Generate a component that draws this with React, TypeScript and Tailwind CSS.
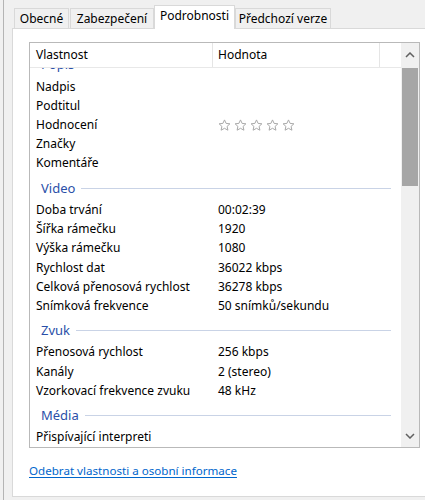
import React from "react";

type Row = { kind: "row"; name: string; value?: string; stars?: boolean } | { kind: "group"; name: string };

const rows: Row[] = [
  { kind: "group", name: "Popis" },
  { kind: "row", name: "Nadpis" },
  { kind: "row", name: "Podtitul" },
  { kind: "row", name: "Hodnocení", stars: true },
  { kind: "row", name: "Značky" },
  { kind: "row", name: "Komentáře" },
  { kind: "group", name: "Video" },
  { kind: "row", name: "Doba trvání", value: "00:02:39" },
  { kind: "row", name: "Šířka rámečku", value: "1920" },
  { kind: "row", name: "Výška rámečku", value: "1080" },
  { kind: "row", name: "Rychlost dat", value: "36022 kbps" },
  { kind: "row", name: "Celková přenosová rychlost", value: "36278 kbps" },
  { kind: "row", name: "Snímková frekvence", value: "50 snímků/sekundu" },
  { kind: "group", name: "Zvuk" },
  { kind: "row", name: "Přenosová rychlost", value: "256 kbps" },
  { kind: "row", name: "Kanály", value: "2 (stereo)" },
  { kind: "row", name: "Vzorkovací frekvence zvuku", value: "48 kHz" },
  { kind: "group", name: "Média" },
  { kind: "row", name: "Přispívající interpreti" },
];

function Star() {
  return (
    <svg width="13" height="13" viewBox="0 0 13 13" className="shrink-0">
      <path
        d="M6.5 0.9 L8.1 4.4 L11.9 4.8 L9.1 7.4 L9.9 11.2 L6.5 9.3 L3.1 11.2 L3.9 7.4 L1.1 4.8 L4.9 4.4 Z"
        fill="#ffffff"
        stroke="#a9a9a9"
        strokeWidth="1"
        strokeLinejoin="round"
      />
    </svg>
  );
}

function Chevron({ up }: { up?: boolean }) {
  return (
    <svg width="10" height="6" viewBox="0 0 10 6">
      <path
        d={up ? "M1 5 L5 1 L9 5" : "M1 1 L5 5 L9 1"}
        fill="none"
        stroke="#606060"
        strokeWidth="1.5"
      />
    </svg>
  );
}

export default function App() {
  return (
    <div
      className="w-[425px] h-[500px] bg-[#f0f0f0] overflow-hidden text-[12px] text-black"
      style={{ fontFamily: '"Noto Sans", "Segoe UI", sans-serif' }}
    >
      <div className="ml-[3px] h-[500px] border-l border-[#b4b4b4] pl-[8px]">
        {/* Tab strip */}
        <div className="flex items-end h-[28px] pl-[2px]">
          <div className="w-[55px] h-[20px] border border-b-0 border-[#d9d9d9] bg-[#f0f0f0] flex items-center justify-center leading-none pt-[1px]">
            Obecné
          </div>
          <div className="ml-[1px] w-[84px] h-[20px] border border-b-0 border-[#d9d9d9] bg-[#f0f0f0] flex items-center justify-center leading-none pt-[1px]">
            Zabezpečení
          </div>
          <div className="relative z-10 w-[81px] h-[24px] -mb-px border border-b-0 border-[#d9d9d9] bg-white flex items-start justify-center leading-none pt-[4px]">
            Podrobnosti
          </div>
          <div className="w-[96px] h-[20px] border border-b-0 border-[#d9d9d9] bg-[#f0f0f0] flex items-center justify-center leading-none pt-[1px]">
            Předchozí verze
          </div>
        </div>

        {/* Panel */}
        <div className="w-[430px] h-[469px] border border-[#d9d9d9] bg-white pt-[13px] pl-[16px]">
          {/* List view */}
          <div className="w-[391px] h-[406px] border border-[#b9b9b9] flex">
            <div className="w-[371px] flex flex-col">
              {/* Header */}
              <div className="h-[25px] flex border-b border-[#e8e8e8] shrink-0">
                <div className="w-[183px] border-r border-[#e5e5e5] pl-[6px] flex items-center pb-[1px]">
                  Vlastnost
                </div>
                <div className="w-[167px] border-r border-[#e5e5e5] pl-[5px] flex items-center pb-[1px]">
                  Hodnota
                </div>
                <div className="flex-1" />
              </div>
              {/* Body */}
              <div className="flex-1 overflow-hidden">
                <div className="mt-[-18.2px]">
                  {rows.map((r, i) =>
                    r.kind === "group" ? (
                      <div key={i} className="h-[27.3px] pt-[6.6px] flex items-start pl-[11px] pr-[10px]">
                        <span className="text-[#2a4fa8] text-[13px] leading-[16px]">{r.name}</span>
                        <div className="flex-1 ml-[6px] mt-[8px] h-px bg-[#c9d3e6]" />
                      </div>
                    ) : (
                      <div key={i} className="h-[19.2px] flex items-center">
                        <div className="w-[188px] pl-[6px] leading-[16px] whitespace-nowrap">{r.name}</div>
                        <div className="flex-1 leading-[16px] whitespace-nowrap">
                          {r.stars ? (
                            <div className="flex gap-[3px]">
                              <Star />
                              <Star />
                              <Star />
                              <Star />
                              <Star />
                            </div>
                          ) : (
                            r.value
                          )}
                        </div>
                      </div>
                    )
                  )}
                </div>
              </div>
            </div>
            {/* Scrollbar */}
            <div className="w-[18px] bg-[#f0f0f0] flex flex-col">
              <div className="h-[25px] flex items-center justify-center pb-[1px]">
                <Chevron up />
              </div>
              <div className="h-[118px] bg-[#a6a6a6] mx-[1px]" />
              <div className="flex-1" />
              <div className="h-[20px] flex items-center justify-center pb-[2px]">
                <Chevron />
              </div>
            </div>
          </div>

          <div className="mt-[15px] leading-[16px]">
            <span className="text-[#0066cc] text-[11.6px] underline underline-offset-2">
              Odebrat vlastnosti a osobní informace
            </span>
          </div>
        </div>
      </div>
    </div>
  );
}
